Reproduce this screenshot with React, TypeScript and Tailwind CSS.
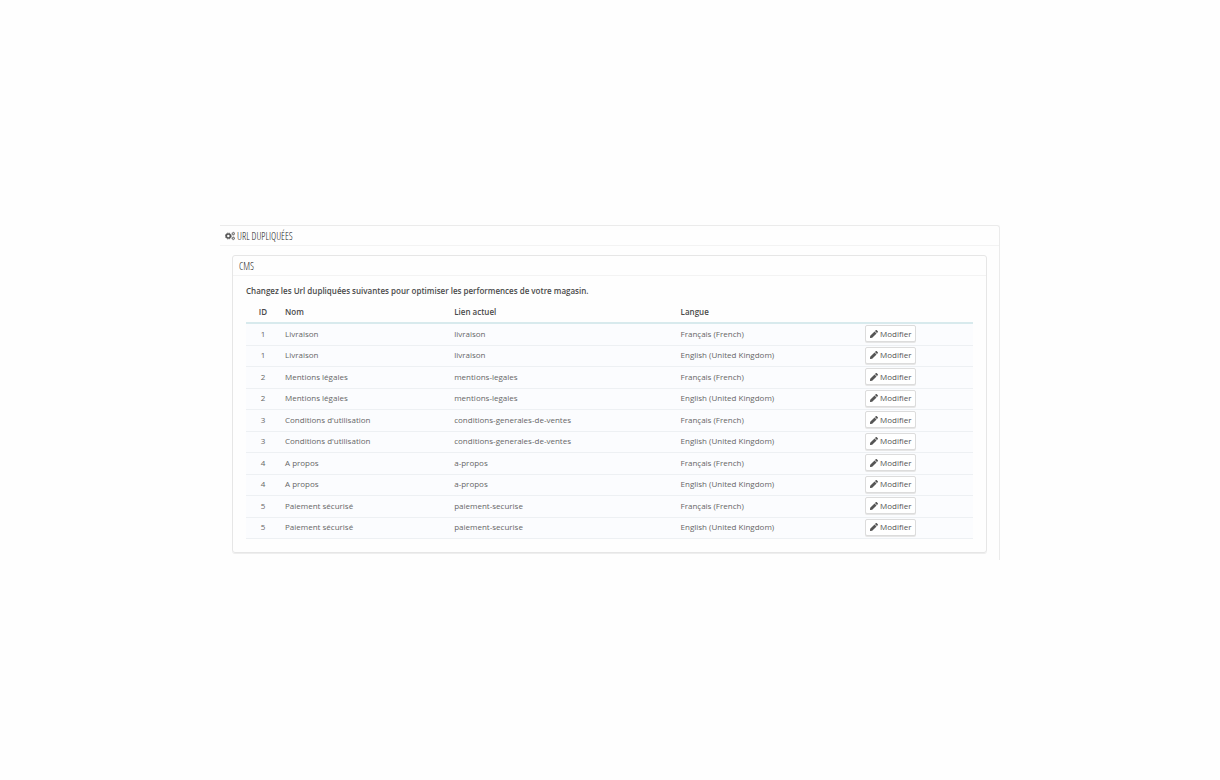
import { FaPen } from 'react-icons/fa';

interface CmsUrl {
  id: number;
  name: string;
  link: string;
  lang: string;
}

const FRENCH = 'Français (French)';
const ENGLISH = 'English (United Kingdom)';

const urls: CmsUrl[] = [
  { id: 1, name: 'Livraison', link: 'livraison', lang: FRENCH },
  { id: 1, name: 'Livraison', link: 'livraison', lang: ENGLISH },
  { id: 2, name: 'Mentions légales', link: 'mentions-legales', lang: FRENCH },
  { id: 2, name: 'Mentions légales', link: 'mentions-legales', lang: ENGLISH },
  { id: 3, name: "Conditions d'utilisation", link: 'conditions-generales-de-ventes', lang: FRENCH },
  { id: 3, name: "Conditions d'utilisation", link: 'conditions-generales-de-ventes', lang: ENGLISH },
  { id: 4, name: 'A propos', link: 'a-propos', lang: FRENCH },
  { id: 4, name: 'A propos', link: 'a-propos', lang: ENGLISH },
  { id: 5, name: 'Paiement sécurisé', link: 'paiement-securise', lang: FRENCH },
  { id: 5, name: 'Paiement sécurisé', link: 'paiement-securise', lang: ENGLISH },
];

// One large gear with two small ones on its right
function CogsIcon() {
  return (
    <svg width="10" height="10" viewBox="0 0 30 30" fill="none" stroke="#555" aria-hidden="true">
      <circle cx="10" cy="15" r="6" strokeWidth="4.6" />
      <circle cx="10" cy="15" r="8.8" strokeWidth="2.6" strokeDasharray="4.6 2.31" />
      <circle cx="25" cy="8" r="3" strokeWidth="2.5" />
      <circle cx="25" cy="8" r="4.6" strokeWidth="1.6" strokeDasharray="2.2 1.41" />
      <circle cx="25" cy="22" r="3" strokeWidth="2.5" />
      <circle cx="25" cy="22" r="4.6" strokeWidth="1.6" strokeDasharray="2.2 1.41" />
    </svg>
  );
}

function UrlTable() {
  return (
    <table className="w-full table-fixed border-collapse text-left">
      <thead>
        <tr className="h-[22px] border-b-2 border-[#d8eaed] text-[#4a4a4a]">
          <th className="w-[34px] text-center font-semibold">ID</th>
          <th className="w-[23%] pl-[5px] font-semibold">Nom</th>
          <th className="w-[31%] pl-[7px] font-semibold">Lien actuel</th>
          <th className="w-[25%] pl-2 font-semibold">Langue</th>
          <th aria-label="Actions" />
        </tr>
      </thead>
      <tbody>
        {urls.map((url, index) => (
          <tr key={index} className="h-[21px] border-b border-[#edf0f3] bg-[#fbfcfe] odd:h-[22px]">
            <td className="pb-px text-center">{url.id}</td>
            <td className="pb-px pl-[5px]">{url.name}</td>
            <td className="pb-px pl-[7px]">{url.link}</td>
            <td className="pb-px pl-2">{url.lang}</td>
            <td className="pb-px pl-[11px]">
              <button
                type="button"
                className="flex h-[17px] w-[51px] items-center justify-center gap-[2px] rounded-[2px] border border-[#dcdcdc] bg-white text-[#555] shadow-[0_1px_0_#e6e6e6] hover:bg-gray-50"
              >
                <FaPen size={8} className="text-[#555]" />
                Modifier
              </button>
            </td>
          </tr>
        ))}
      </tbody>
    </table>
  );
}

export default function App() {
  return (
    <main className="min-h-screen bg-[#fefefe] px-4 pt-[225px] font-['Open_Sans',sans-serif] text-[8px] leading-[12px] text-[#666]">
      <section className="mx-auto max-w-[780px] rounded-tr-[3px] border-t border-r border-[#ebebeb] bg-[#fefefe] pb-[7px]">
        <h1 className="flex h-5 items-center gap-[2px] border-b border-[#f3f3f3] pl-[5px] font-['Open_Sans_Condensed_Light','Open_Sans_Condensed','Liberation_Sans_Narrow',sans-serif] text-[10px] font-light text-[#222]">
          <CogsIcon />
          URL DUPLIQUÉES
        </h1>

        <div className="mx-3 mt-[9px] rounded-[3px] border border-[#e6e6e6] pb-[13px] shadow-[0_1px_0_#eeeeee]">
          <h2 className="flex h-5 items-center border-b border-[#f3f3f3] pl-[6px] font-['Open_Sans_Condensed_Light','Open_Sans_Condensed','Liberation_Sans_Narrow',sans-serif] text-[10px] font-light text-[#222]">
            CMS
          </h2>
          <div className="px-[13px] pt-[9px]">
            <p className="mb-1 font-semibold text-[#4a4a4a]">
              Changez les Url dupliquées suivantes pour optimiser les performences de votre magasin.
            </p>
            <UrlTable />
          </div>
        </div>
      </section>
    </main>
  );
}
